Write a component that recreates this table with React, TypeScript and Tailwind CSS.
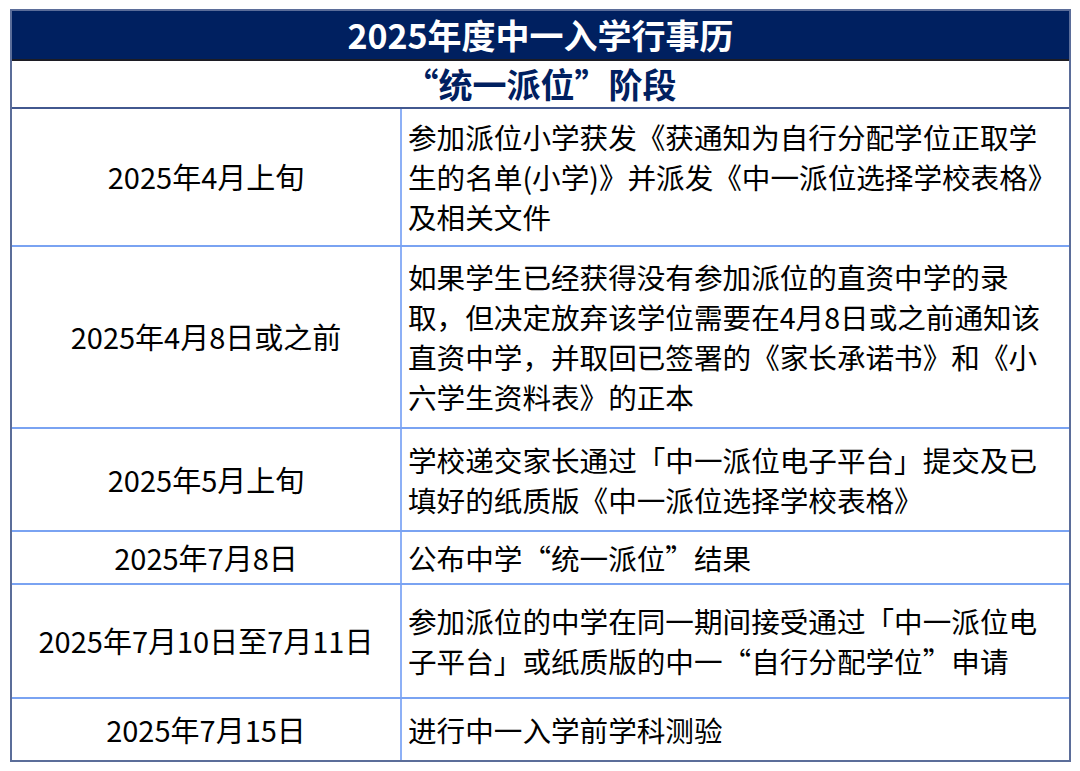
const rows: { date: string; lines: string[]; h: string }[] = [
  {
    date: "2025年4月上旬",
    h: "h-[138px]",
    lines: [
      "参加派位小学获发《获通知为自行分配学位正取学",
      "生的名单(小学)》并派发《中一派位选择学校表格》",
      "及相关文件",
    ],
  },
  {
    date: "2025年4月8日或之前",
    h: "h-[182px]",
    lines: [
      "如果学生已经获得没有参加派位的直资中学的录",
      "取，但决定放弃该学位需要在4月8日或之前通知该",
      "直资中学，并取回已签署的《家长承诺书》和《小",
      "六学生资料表》的正本",
    ],
  },
  {
    date: "2025年5月上旬",
    h: "h-[103px]",
    lines: [
      "学校递交家长通过「中一派位电子平台」提交及已",
      "填好的纸质版《中一派位选择学校表格》",
    ],
  },
  {
    date: "2025年7月8日",
    h: "h-[53px]",
    lines: ["公布中学“统一派位”结果"],
  },
  {
    date: "2025年7月10日至7月11日",
    h: "h-[114px]",
    lines: [
      "参加派位的中学在同一期间接受通过「中一派位电",
      "子平台」或纸质版的中一“自行分配学位”申请",
    ],
  },
  {
    date: "2025年7月15日",
    h: "h-[61px]",
    lines: ["进行中一入学前学科测验"],
  },
];

export default function App() {
  return (
    <div
      className="w-[1080px] h-[771px] bg-white pt-[9px] pl-[10px]"
      style={{ fontFamily: '"Noto Sans CJK SC", "Noto Sans", sans-serif' }}
    >
      <div className="w-[1061px] border-2 border-[#5b6d99] text-black">
        <div className="h-[50px] bg-[#002060] border-b-2 border-[#1c1c24] flex items-center justify-center text-white text-[34px] font-bold leading-none">
          2025年度中一入学行事历
        </div>
        <div className="h-[48px] border-b-2 border-[#42588f] flex items-center justify-center text-[#002060] text-[34px] font-bold leading-none">
          “统一派位”阶段
        </div>
        {rows.map((r, i) => (
          <div
            key={r.date}
            className={`grid grid-cols-[390px_1fr] ${r.h} ${
              i < rows.length - 1 ? "border-b-2 border-[#7aa3f2]" : ""
            }`}
          >
            <div className="flex items-center justify-center border-r-2 border-[#8db0f6] text-[29px]">
              {r.date}
            </div>
            <div className="flex flex-col justify-center pl-[6px] text-[28.6px] leading-[40px]">
              {r.lines.map((l) => (
                <div key={l} className="whitespace-nowrap">
                  {l}
                </div>
              ))}
            </div>
          </div>
        ))}
      </div>
    </div>
  );
}
